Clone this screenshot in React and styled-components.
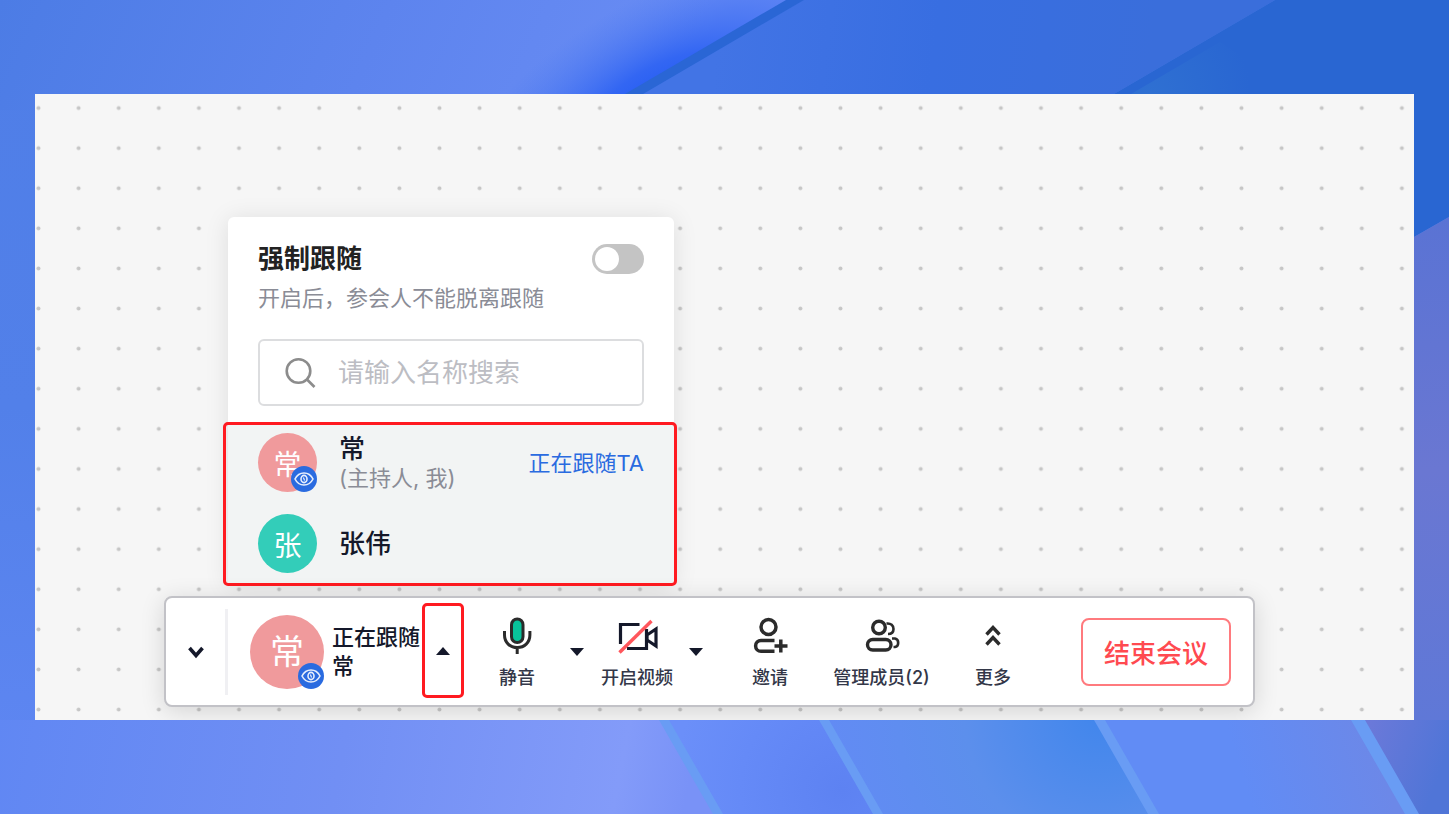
import React from "react";
import styled, { createGlobalStyle } from "styled-components";

const Global = createGlobalStyle`
  *, *::before, *::after { box-sizing: border-box; }
  body { margin: 0; }
  button, input { font: inherit; }
`;

const Page = styled.main`
  position: relative;
  min-height: 100vh;
  padding: 94px 35px;
  font-family: Inter, "Noto Sans CJK SC", sans-serif;
  color: #14182a;
  background: #5f85f1;
`;

const BackdropSvg = styled.svg`
  position: absolute;
  inset: 0;
  width: 100%;
  height: 100%;
`;

const Board = styled.section`
  position: relative;
  overflow: hidden;
  padding: 123px 159px 13px 129px;
  background: #f6f6f6;
`;

const DotsSvg = styled.svg`
  position: absolute;
  inset: 0;
  width: 100%;
  height: 100%;
`;

const Popup = styled.section`
  position: relative;
  width: 446px;
  margin: 0 0 10px 64px;
  border-radius: 6px;
  background: #fff;
  box-shadow: 0 2px 24px rgba(0, 0, 0, 0.1);
`;

const PopupHead = styled.div`
  display: flex;
  flex-direction: column;
  height: 205px;
  padding: 25px 30px 16px;
`;

const TitleRow = styled.label`
  display: flex;
  align-items: center;
  justify-content: space-between;
  height: 34px;
  font-size: 26px;
  line-height: 34px;
  font-weight: 700;
  color: #222;
`;

const Switch = styled.input`
  appearance: none;
  display: flex;
  align-items: center;
  width: 52px;
  height: 30px;
  margin: 0;
  padding: 3px;
  border-radius: 15px;
  background: #c4c4c4;
  &::before {
    content: "";
    width: 24px;
    height: 24px;
    border-radius: 50%;
    background: #fff;
  }
  &:checked { justify-content: flex-end; background: #2a6be0; }
`;

const Hint = styled.p`
  margin: 5px 0 24px;
  font-size: 22px;
  line-height: 34px;
  color: #8a8c96;
`;

const Search = styled.label`
  display: flex;
  align-items: center;
  gap: 22px;
  height: 67px;
  padding: 0 24px;
  border: 2px solid #dcdddf;
  border-radius: 6px;
  color: #8c8c8c;
`;

const SearchInput = styled.input`
  flex: 1;
  min-width: 0;
  padding: 0;
  border: 0;
  outline: 0;
  background: none;
  font-size: 26px;
  color: #14182a;
  &::placeholder { color: #bcbdc3; opacity: 1; }
`;

const MemberList = styled.ul`
  position: relative;
  margin: 0;
  padding: 0 0 2px;
  list-style: none;
  background: #f2f4f4;
  &::after {
    content: "";
    position: absolute;
    inset: 0 -3px 0 -5px;
    border: 3px solid #ff1a20;
    border-radius: 5px;
    pointer-events: none;
  }
`;

const Member = styled.li`
  display: flex;
  align-items: center;
  gap: 22px;
  height: 81px;
  padding: 0 30px;
`;

const Names = styled.div`
  display: flex;
  flex: 1;
  flex-direction: column;
`;

const Name = styled.span`
  font-size: 26px;
  font-weight: 500;
  line-height: 30px;
`;

const Role = styled.span`
  font-size: 22px;
  line-height: 28px;
  color: #8a8c96;
`;

const Following = styled.span`
  font-size: 22px;
  line-height: 28px;
  color: #2a6be0;
`;

const AvatarDisc = styled.span`
  position: relative;
  display: flex;
  flex: none;
  align-items: center;
  justify-content: center;
  width: ${(p) => (p.$large ? 74 : 59)}px;
  height: ${(p) => (p.$large ? 74 : 59)}px;
  border-radius: 50%;
  font-size: ${(p) => (p.$large ? 34 : 28)}px;
  color: #fff;
  background: ${(p) => p.$color};
`;

const EyeBadge = styled.span`
  position: absolute;
  right: 0;
  bottom: 0;
  display: flex;
  width: 26px;
  height: 26px;
  border-radius: 50%;
  background: #2a6be0;
`;

const Toolbar = styled.nav`
  position: relative;
  display: flex;
  align-items: center;
  height: 111px;
  padding: 0 22px 0 0;
  border: 2px solid #c2c2c7;
  border-radius: 8px;
  background: #fff;
  box-shadow: 0 4px 24px rgba(0, 0, 0, 0.14);
`;

const PlainButton = styled.button`
  display: flex;
  flex: none;
  align-items: center;
  justify-content: center;
  padding: 0;
  border: 0;
  background: none;
  color: #14182a;
`;

const CollapseButton = styled(PlainButton)`
  width: 62px;
  height: 86px;
  border-right: 3px solid #f0f0f3;
`;

const FollowState = styled.div`
  display: flex;
  flex: none;
  align-items: center;
  gap: 8px;
  margin-left: 22px;
  font-size: 22px;
  line-height: 29px;
`;

const FollowText = styled.span`
  display: flex;
  flex-direction: column;
  width: 90px;
  font-weight: 500;
`;

const FollowToggle = styled(PlainButton)`
  width: 42px;
  height: 95px;
  margin-bottom: 3px;
  padding-top: 2px;
  border: 3px solid #ff1a20;
  border-radius: 5px;
`;

const Tool = styled(PlainButton)`
  flex-direction: column;
  gap: 8px;
  width: ${(p) => p.$width}px;
  padding-top: 4px;
  font-size: 18px;
  line-height: 26px;
  font-weight: 500;
  color: #333748;
`;

const Tools = styled.div`
  display: flex;
  flex: 1;
  align-items: center;
  padding-left: 34px;
`;

const ArrowButton = styled(PlainButton)`
  width: 20px;
  height: 40px;
  margin: 0 ${(p) => p.$after}px 0 ${(p) => p.$before}px;
`;

const EndButton = styled.button`
  flex: none;
  width: 150px;
  height: 68px;
  padding: 0;
  border: 2px solid #ff7a7e;
  border-radius: 8px;
  background: #fff;
  font-size: 26px;
  font-weight: 500;
  color: #ff4a50;
`;

function Backdrop() {
  return (
    <BackdropSvg viewBox="0 0 1449 814" preserveAspectRatio="none" aria-hidden="true">
      <defs>
        <linearGradient id="sky" gradientUnits="userSpaceOnUse" x1="0" y1="0" x2="600" y2="260">
          <stop offset="0" stopColor="#4c7ce5" />
          <stop offset="0.55" stopColor="#5d84ee" />
          <stop offset="1" stopColor="#698cf4" />
        </linearGradient>
        <linearGradient id="left" x1="0" y1="0" x2="0" y2="1">
          <stop offset="0" stopColor="#4f7ee7" />
          <stop offset="0.5" stopColor="#5280e9" />
          <stop offset="1" stopColor="#6087f3" />
        </linearGradient>
        <radialGradient
          id="glow"
          gradientUnits="userSpaceOnUse"
          cx="0"
          cy="0"
          r="1"
          gradientTransform="translate(660 104) rotate(-30) scale(230 105)"
        >
          <stop offset="0" stopColor="#1f58f4" />
          <stop offset="0.35" stopColor="#2d62f3" stopOpacity="0.9" />
          <stop offset="1" stopColor="#4a78f2" stopOpacity="0" />
        </radialGradient>
        <linearGradient id="band" gradientUnits="userSpaceOnUse" x1="720" y1="20" x2="1150" y2="70">
          <stop offset="0" stopColor="#4274e5" />
          <stop offset="0.5" stopColor="#386ee1" />
          <stop offset="1" stopColor="#3a6edb" />
        </linearGradient>
        <radialGradient id="teal" gradientUnits="userSpaceOnUse" cx="1150" cy="94" r="100">
          <stop offset="0" stopColor="#2f70d2" />
          <stop offset="1" stopColor="#2966d2" />
        </radialGradient>
        <linearGradient id="bottom" gradientUnits="userSpaceOnUse" x1="0" y1="700" x2="680" y2="830">
          <stop offset="0" stopColor="#6087f3" />
          <stop offset="0.5" stopColor="#718ff4" />
          <stop offset="0.9" stopColor="#839bf9" />
          <stop offset="1" stopColor="#7992f7" />
        </linearGradient>
        <radialGradient id="b2" gradientUnits="userSpaceOnUse" cx="842" cy="790" r="170">
          <stop offset="0" stopColor="#5d82f2" />
          <stop offset="0.6" stopColor="#658af7" />
          <stop offset="1" stopColor="#6b8ff9" />
        </radialGradient>
        <radialGradient id="b3" gradientUnits="userSpaceOnUse" cx="1100" cy="715" r="270">
          <stop offset="0" stopColor="#4186ec" />
          <stop offset="0.5" stopColor="#5c8fec" />
          <stop offset="1" stopColor="#628bf4" />
        </radialGradient>
        <linearGradient id="b4" gradientUnits="userSpaceOnUse" x1="1240" y1="770" x2="1370" y2="730">
          <stop offset="0" stopColor="#618cf5" />
          <stop offset="1" stopColor="#6c88e8" />
        </linearGradient>
        <linearGradient id="right" gradientUnits="userSpaceOnUse" x1="1414" y1="220" x2="1449" y2="720">
          <stop offset="0" stopColor="#5a73d4" />
          <stop offset="0.5" stopColor="#6a77d2" />
          <stop offset="1" stopColor="#5f78d7" />
        </linearGradient>
        <linearGradient id="b5" gradientUnits="userSpaceOnUse" x1="1370" y1="720" x2="1449" y2="750">
          <stop offset="0" stopColor="#6b79d9" />
          <stop offset="1" stopColor="#5075d7" />
        </linearGradient>
      </defs>
      <rect width="1449" height="814" fill="url(#left)" />
      <rect width="900" height="110" fill="url(#sky)" />
      <rect width="900" height="110" fill="url(#glow)" />
      <path d="M803 0H1275L1114 94H642Z" fill="url(#band)" />
      <path d="M786 0H804L643 94H625Z" fill="#2a66d5" />
      <path d="M1275 0H1449V217L1414 237V94H1114Z" fill="#2966d2" />
      <path d="M1131 94L1220 42L1300 94Z" fill="url(#teal)" />
      <path d="M1414 237L1449 217V720H1414Z" fill="url(#right)" />
      <path d="M0 720H660L714 814H0Z" fill="url(#bottom)" />
      <path d="M660 720H830L884 814H714Z" fill="url(#b2)" />
      <path d="M820 720H1100L1155 814H874Z" fill="url(#b3)" />
      <path d="M1100 720H1360L1415 814H1155Z" fill="url(#b4)" />
      <path d="M1360 720H1449V814H1415Z" fill="url(#b5)" />
      <path d="M659 720H669L723 814H713ZM819 720H829L883 814H873ZM1094 720H1105L1159 814H1148ZM1351 720H1365L1419 814H1405Z" fill="#699cf4" />
    </BackdropSvg>
  );
}

function DotGrid() {
  return (
    <DotsSvg aria-hidden="true">
      <defs>
        <pattern id="dots" patternUnits="userSpaceOnUse" x="-16.500" y="-6" width="40.1" height="40.1">
          <circle cx="20" cy="20" r="2" fill="#c6c6c6" />
        </pattern>
      </defs>
      <rect width="100%" height="100%" fill="url(#dots)" />
    </DotsSvg>
  );
}

function Avatar({ text, color, large, watched }) {
  return (
    <AvatarDisc $color={color} $large={large}>
      {text}
      {watched && (
        <EyeBadge>
          <svg width="26" height="26" viewBox="0 0 26 26" fill="none" stroke="#e6eefc" strokeWidth="1.6" aria-hidden="true">
            <path d="M4 13C6 9 9 7 13 7s7 2 9 6c-2 4-5 6-9 6s-7-2-9-6Z" />
            <ellipse cx="13" cy="13" rx="3" ry="3.6" />
            <path d="M12.400 11.500l1.200 3" strokeWidth="1.200" />
          </svg>
        </EyeBadge>
      )}
    </AvatarDisc>
  );
}

const line = { fill: "none", stroke: "#2b2b2b", strokeWidth: 3, "aria-hidden": true };

const MicIcon = () => (
  <svg width="40" height="40" viewBox="0 0 40 40" {...line}>
    <rect x="14.500" y="2" width="11.500" height="23.500" rx="5.750" fill="#08c39b" />
    <path d="M7.500 14v4c0 7.500 5.500 12.500 12.700 12.500s12.700-5 12.700-12.500v-4M20.200 30v7" />
  </svg>
);

const CameraOffIcon = () => (
  <svg width="44" height="40" viewBox="0 0 44 40" {...line} strokeWidth="3.200" stroke="#14182a">
    <path d="M24.500 7.500H5.500V27M12 31.500h19.500V12" />
    <path d="M32 18l9-6v17l-9-6Z" />
    <path d="M4.500 35.500L36.500 4" stroke="#ff565c" strokeWidth="3.400" />
  </svg>
);

const InviteIcon = () => (
  <svg width="40" height="40" viewBox="0 0 40 40" {...line} strokeWidth="3.500">
    <circle cx="18.500" cy="10" r="7.500" />
    <path d="M24.500 23.500H11a5.400 5.400 0 0 0 0 10.800H24.500M24.500 29h13M30.800 22.500v13" />
  </svg>
);

const MembersIcon = () => (
  <svg width="40" height="40" viewBox="0 0 40 40" {...line} strokeWidth="3.400">
    <circle cx="17" cy="10.500" r="6.300" />
    <rect x="5.500" y="22.500" width="23.500" height="10.500" rx="5.250" />
    <path d="M24.500 6.500c4.500-.5 7 2 7 5.500s-2.500 5-5.500 5M30 21.500h3c4.500 1 4 8 0 8.500h-1.500" strokeWidth="2.600" />
  </svg>
);

const MoreIcon = () => (
  <svg width="40" height="40" viewBox="0 0 40 40" {...line} strokeWidth="3.400">
    <path d="M13.500 17.500L20 10.500l6.500 7M13.500 27.500L20 20.500l6.500 7" />
  </svg>
);

const Arrow = ({ up }) => (
  <svg width="14" height="8" viewBox="0 0 14 8" aria-hidden="true">
    <path d={up ? "M0 8L7 0l7 8Z" : "M0 0h14L7 8Z"} fill="#14182a" />
  </svg>
);

export default function App() {
  return (
    <Page>
      <Global />
      <Backdrop />
      <Board>
        <DotGrid />
        <Popup>
          <PopupHead>
            <TitleRow>
              强制跟随
              <Switch type="checkbox" role="switch" />
            </TitleRow>
            <Hint>开启后，参会人不能脱离跟随</Hint>
            <Search>
              <svg width="32" height="32" viewBox="0 0 32 32" fill="none" stroke="currentColor" strokeWidth="2.600" aria-hidden="true">
                <circle cx="14.500" cy="14" r="11.800" />
                <path d="M22.500 22l8 8" />
              </svg>
              <SearchInput type="text" placeholder="请输入名称搜索" aria-label="请输入名称搜索" />
            </Search>
          </PopupHead>
          <MemberList>
            <Member>
              <Avatar text="常" color="#f09a9c" watched />
              <Names>
                <Name>常</Name>
                <Role>(主持人, 我)</Role>
              </Names>
              <Following>正在跟随TA</Following>
            </Member>
            <Member>
              <Avatar text="张" color="#33cdb9" />
              <Names>
                <Name>张伟</Name>
              </Names>
            </Member>
          </MemberList>
        </Popup>
        <Toolbar>
          <CollapseButton type="button" aria-label="收起">
            <svg width="18" height="14" viewBox="0 0 18 14" fill="none" stroke="#14182a" strokeWidth="3.600" aria-hidden="true">
              <path d="M2.500 3L9 10.500L15.500 3" />
            </svg>
          </CollapseButton>
          <FollowState>
            <Avatar text="常" color="#f09a9c" large watched />
            <FollowText>
              <span>正在跟随</span>
              <span>常</span>
            </FollowText>
          </FollowState>
          <FollowToggle type="button" aria-label="选择跟随">
            <Arrow up />
          </FollowToggle>
          <Tools>
            <Tool type="button" $width={38}>
              <MicIcon />
              静音
            </Tool>
            <ArrowButton type="button" aria-label="音频选项" $before={31} $after={12}>
              <Arrow />
            </ArrowButton>
            <Tool type="button" $width={76}>
              <CameraOffIcon />
              开启视频
            </Tool>
            <ArrowButton type="button" aria-label="视频选项" $before={11} $after={39}>
              <Arrow />
            </ArrowButton>
            <Tool type="button" $width={50}>
              <InviteIcon />
              邀请
            </Tool>
            <Tool type="button" $width={173}>
              <MembersIcon />
              管理成员(2)
            </Tool>
            <Tool type="button" $width={50}>
              <MoreIcon />
              更多
            </Tool>
          </Tools>
          <EndButton type="button">结束会议</EndButton>
        </Toolbar>
      </Board>
    </Page>
  );
}
